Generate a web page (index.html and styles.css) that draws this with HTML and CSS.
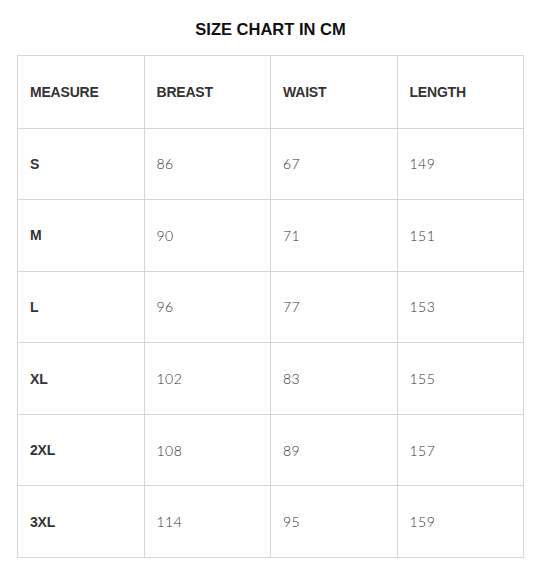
FILE: index.html
```html
<!DOCTYPE html>
<html>
<head>
<meta charset="utf-8">
<link rel="stylesheet" href="styles.css">
</head>
<body>
<div class="page">
  <h2 class="title">SIZE CHART IN CM</h2>
  <table class="chart">
    <thead>
      <tr><th>MEASURE</th><th>BREAST</th><th>WAIST</th><th>LENGTH</th></tr>
    </thead>
    <tbody>
      <tr><th>S</th><td>86</td><td>67</td><td>149</td></tr>
      <tr><th>M</th><td>90</td><td>71</td><td>151</td></tr>
      <tr><th>L</th><td>96</td><td>77</td><td>153</td></tr>
      <tr><th>XL</th><td>102</td><td>83</td><td>155</td></tr>
      <tr><th>2XL</th><td>108</td><td>89</td><td>157</td></tr>
      <tr><th>3XL</th><td>114</td><td>95</td><td>159</td></tr>
    </tbody>
  </table>
</div>
</body>
</html>
```
FILE: styles.css
```css
html, body {
  margin: 0;
  padding: 0;
  background: #fff;
}
.page {
  width: 507px;
  margin-left: 17px;
  padding-top: 19px;
}
.title {
  margin: 0 0 16px 0;
  text-align: center;
  font-family: "Liberation Sans", Arial, sans-serif;
  font-weight: 700;
  font-size: 16.5px;
  line-height: 20px;
  color: #111;
}
.chart {
  width: 507px;
  border-collapse: collapse;
  table-layout: fixed;
}
.chart th, .chart td {
  border: 1px solid #d6d6d6;
  height: 71.6px;
  padding: 0 12px;
  text-align: left;
  vertical-align: middle;
  box-sizing: border-box;
}
.chart thead th {
  height: 72.5px;
}
.chart th {
  font-family: "Liberation Sans", Arial, sans-serif;
  font-weight: 700;
  font-size: 14px;
  letter-spacing: -0.2px;
  color: #333;
}
.chart td {
  font-family: Lato, "DejaVu Sans", sans-serif;
  font-weight: 300;
  font-size: 14px;
  color: #333;
  letter-spacing: 0.5px;
}
```
